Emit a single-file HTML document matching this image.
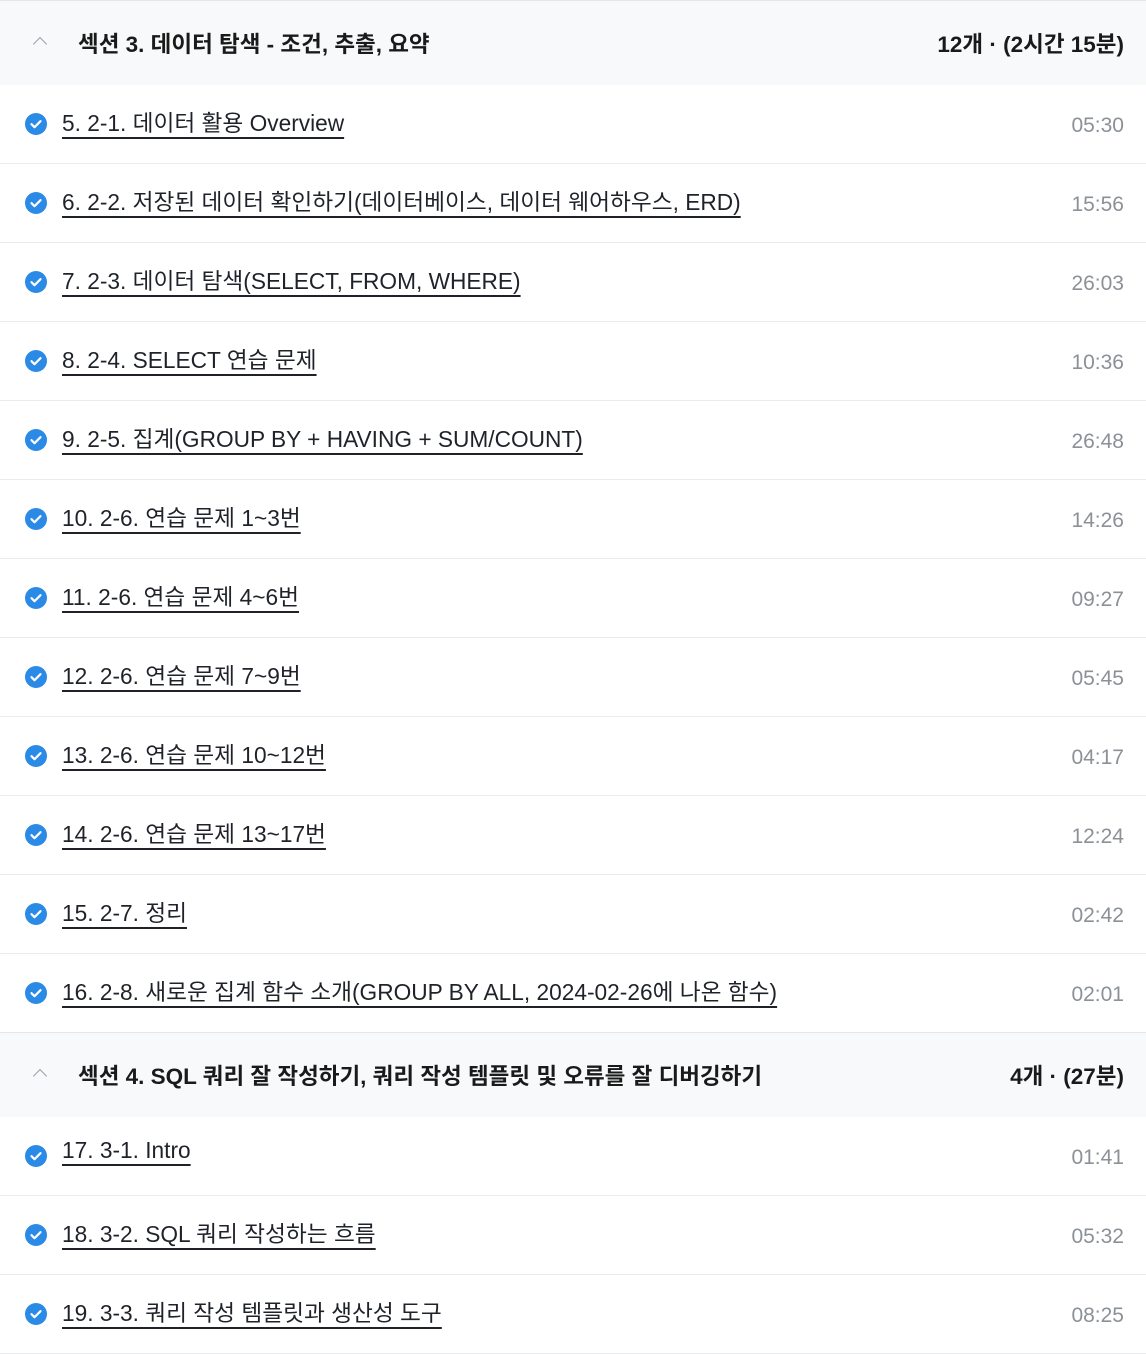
<!DOCTYPE html>
<html><head><meta charset="utf-8"><style>
body{margin:0;width:1146px;height:1350px;overflow:hidden;background:#fff;font-family:"Liberation Sans","Noto Sans CJK KR",sans-serif;}
.top{height:1px;background:#e4e6ea}
.hd{height:84px;background:#f8f9fa;position:relative}
.hd .ch{position:absolute;left:35px;top:38px;width:9px;height:9px;border-left:1.6px solid #9aa0a6;border-top:1.6px solid #9aa0a6;transform:rotate(45deg)}
.hd .t{position:absolute;left:78px;font-size:22.5px;font-weight:bold;color:#1a1a1a;top:26px}
.hd .r{position:absolute;right:22px;font-size:22.5px;font-weight:bold;color:#1a1a1a;top:26px}
.row{height:78px;border-bottom:1px solid #e9ecef;position:relative}
.row svg{position:absolute;left:25px;top:28px}
.row .l{position:absolute;left:62px;top:20px;font-size:22.7px;color:#1f2329;text-decoration:underline;text-underline-offset:6px;text-decoration-thickness:1.5px}
.row .d{position:absolute;right:22px;top:29px;font-size:21px;color:#8b9197}
</style></head><body>
<div class="top"></div>
<div class="hd"><div class="ch"></div><div class="t">섹션 3. 데이터 탐색 - 조건, 추출, 요약</div><div class="r">12개 · (2시간 15분)</div></div>
<div class="row"><svg width="22" height="22"><circle cx="11" cy="11" r="11" fill="#2a8ae6"/><path d="M6.5 11.2l3 3 6-6" stroke="#fff" stroke-width="2.2" fill="none" stroke-linecap="round" stroke-linejoin="round"/></svg><span class="l">5. 2-1. 데이터 활용 Overview</span><span class="d">05:30</span></div>
<div class="row"><svg width="22" height="22"><circle cx="11" cy="11" r="11" fill="#2a8ae6"/><path d="M6.5 11.2l3 3 6-6" stroke="#fff" stroke-width="2.2" fill="none" stroke-linecap="round" stroke-linejoin="round"/></svg><span class="l">6. 2-2. 저장된 데이터 확인하기(데이터베이스, 데이터 웨어하우스, ERD)</span><span class="d">15:56</span></div>
<div class="row"><svg width="22" height="22"><circle cx="11" cy="11" r="11" fill="#2a8ae6"/><path d="M6.5 11.2l3 3 6-6" stroke="#fff" stroke-width="2.2" fill="none" stroke-linecap="round" stroke-linejoin="round"/></svg><span class="l">7. 2-3. 데이터 탐색(SELECT, FROM, WHERE)</span><span class="d">26:03</span></div>
<div class="row"><svg width="22" height="22"><circle cx="11" cy="11" r="11" fill="#2a8ae6"/><path d="M6.5 11.2l3 3 6-6" stroke="#fff" stroke-width="2.2" fill="none" stroke-linecap="round" stroke-linejoin="round"/></svg><span class="l">8. 2-4. SELECT 연습 문제</span><span class="d">10:36</span></div>
<div class="row"><svg width="22" height="22"><circle cx="11" cy="11" r="11" fill="#2a8ae6"/><path d="M6.5 11.2l3 3 6-6" stroke="#fff" stroke-width="2.2" fill="none" stroke-linecap="round" stroke-linejoin="round"/></svg><span class="l">9. 2-5. 집계(GROUP BY + HAVING + SUM/COUNT)</span><span class="d">26:48</span></div>
<div class="row"><svg width="22" height="22"><circle cx="11" cy="11" r="11" fill="#2a8ae6"/><path d="M6.5 11.2l3 3 6-6" stroke="#fff" stroke-width="2.2" fill="none" stroke-linecap="round" stroke-linejoin="round"/></svg><span class="l">10. 2-6. 연습 문제 1~3번</span><span class="d">14:26</span></div>
<div class="row"><svg width="22" height="22"><circle cx="11" cy="11" r="11" fill="#2a8ae6"/><path d="M6.5 11.2l3 3 6-6" stroke="#fff" stroke-width="2.2" fill="none" stroke-linecap="round" stroke-linejoin="round"/></svg><span class="l">11. 2-6. 연습 문제 4~6번</span><span class="d">09:27</span></div>
<div class="row"><svg width="22" height="22"><circle cx="11" cy="11" r="11" fill="#2a8ae6"/><path d="M6.5 11.2l3 3 6-6" stroke="#fff" stroke-width="2.2" fill="none" stroke-linecap="round" stroke-linejoin="round"/></svg><span class="l">12. 2-6. 연습 문제 7~9번</span><span class="d">05:45</span></div>
<div class="row"><svg width="22" height="22"><circle cx="11" cy="11" r="11" fill="#2a8ae6"/><path d="M6.5 11.2l3 3 6-6" stroke="#fff" stroke-width="2.2" fill="none" stroke-linecap="round" stroke-linejoin="round"/></svg><span class="l">13. 2-6. 연습 문제 10~12번</span><span class="d">04:17</span></div>
<div class="row"><svg width="22" height="22"><circle cx="11" cy="11" r="11" fill="#2a8ae6"/><path d="M6.5 11.2l3 3 6-6" stroke="#fff" stroke-width="2.2" fill="none" stroke-linecap="round" stroke-linejoin="round"/></svg><span class="l">14. 2-6. 연습 문제 13~17번</span><span class="d">12:24</span></div>
<div class="row"><svg width="22" height="22"><circle cx="11" cy="11" r="11" fill="#2a8ae6"/><path d="M6.5 11.2l3 3 6-6" stroke="#fff" stroke-width="2.2" fill="none" stroke-linecap="round" stroke-linejoin="round"/></svg><span class="l">15. 2-7. 정리</span><span class="d">02:42</span></div>
<div class="row" style="border-bottom:1px solid #e4e6ea"><svg width="22" height="22"><circle cx="11" cy="11" r="11" fill="#2a8ae6"/><path d="M6.5 11.2l3 3 6-6" stroke="#fff" stroke-width="2.2" fill="none" stroke-linecap="round" stroke-linejoin="round"/></svg><span class="l">16. 2-8. 새로운 집계 함수 소개(GROUP BY ALL, 2024-02-26에 나온 함수)</span><span class="d">02:01</span></div>
<div class="hd"><div class="ch"></div><div class="t">섹션 4. SQL 쿼리 잘 작성하기, 쿼리 작성 템플릿 및 오류를 잘 디버깅하기</div><div class="r">4개 · (27분)</div></div>
<div class="row"><svg width="22" height="22"><circle cx="11" cy="11" r="11" fill="#2a8ae6"/><path d="M6.5 11.2l3 3 6-6" stroke="#fff" stroke-width="2.2" fill="none" stroke-linecap="round" stroke-linejoin="round"/></svg><span class="l">17. 3-1. Intro</span><span class="d">01:41</span></div>
<div class="row"><svg width="22" height="22"><circle cx="11" cy="11" r="11" fill="#2a8ae6"/><path d="M6.5 11.2l3 3 6-6" stroke="#fff" stroke-width="2.2" fill="none" stroke-linecap="round" stroke-linejoin="round"/></svg><span class="l">18. 3-2. SQL 쿼리 작성하는 흐름</span><span class="d">05:32</span></div>
<div class="row"><svg width="22" height="22"><circle cx="11" cy="11" r="11" fill="#2a8ae6"/><path d="M6.5 11.2l3 3 6-6" stroke="#fff" stroke-width="2.2" fill="none" stroke-linecap="round" stroke-linejoin="round"/></svg><span class="l">19. 3-3. 쿼리 작성 템플릿과 생산성 도구</span><span class="d">08:25</span></div>
</body></html>
